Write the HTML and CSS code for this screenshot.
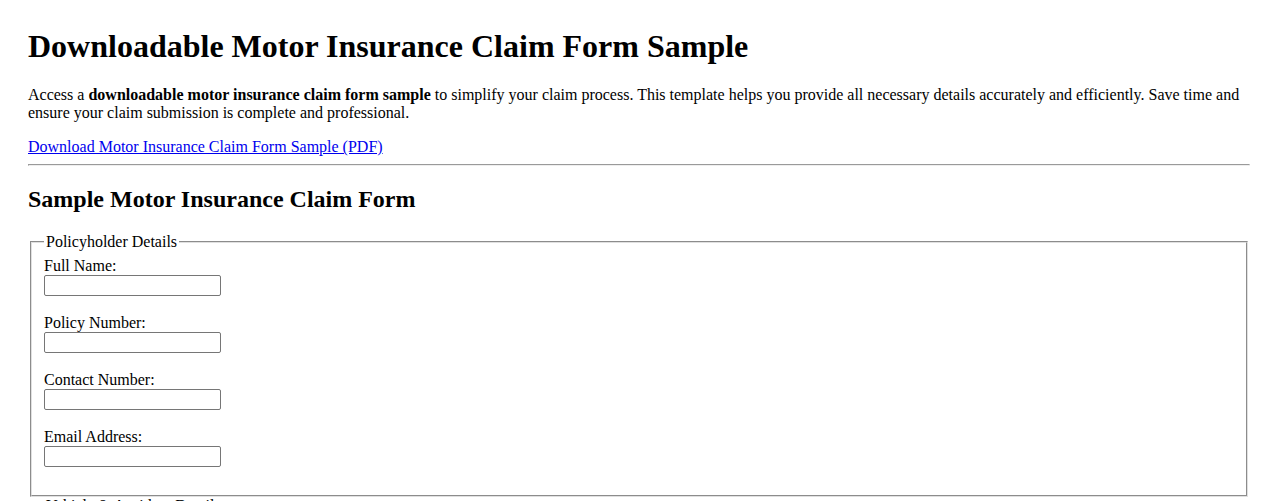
FILE: index.html
```html
<!DOCTYPE html>
<html lang="en">
<head>
<meta charset="utf-8">
<title>Downloadable Motor Insurance Claim Form Sample</title>
<link rel="stylesheet" href="styles.css">
</head>
<body>
<h1 class="title">Downloadable Motor Insurance Claim Form Sample</h1>
<p>Access a <strong>downloadable motor insurance claim form sample</strong> to simplify your claim process. This template helps you provide all necessary details accurately and efficiently. Save time and ensure your claim submission is complete and professional.</p>
<div class="download"><a href="#">Download Motor Insurance Claim Form Sample (PDF)</a></div>
<hr>
<h2>Sample Motor Insurance Claim Form</h2>
<form>
<fieldset>
<legend>Policyholder Details</legend>
<div class="form-group"><label>Full Name:</label><br><input type="text"></div>
<div class="form-group"><label>Policy Number:</label><br><input type="text"></div>
<div class="form-group"><label>Contact Number:</label><br><input type="text"></div>
<div class="form-group"><label>Email Address:</label><br><input type="text"></div>
</fieldset>
<fieldset>
<legend>Vehicle &amp; Accident Details</legend>
<div class="form-group"><label>Vehicle Registration Number:</label><br><input type="text"></div>
<div class="form-group"><label>Date of Accident:</label><br><input type="text"></div>
</fieldset>
</form>
</body>
</html>
```
FILE: styles.css
```css
html, body {
  margin: 0;
  padding: 0;
}
body {
  padding: 28px 28px;
  font-family: "Liberation Serif", "Times New Roman", serif;
  font-size: 16px;
  color: #000;
  background: #fff;
}
.title {
  margin-top: 0;
}
.download {
  margin: 0;
}
.form-group {
  margin-bottom: 18px;
}
input {
  font-family: "Liberation Sans", Arial, sans-serif;
  font-size: 13.333px;
  width: 177px;
  height: 21px;
  box-sizing: border-box;
  padding: 1px 2px;
  border: 1px solid #767676;
  border-radius: 2px;
}
fieldset {
  margin: 0 2px;
  border: 2px groove #e0e0e0;
}
```
